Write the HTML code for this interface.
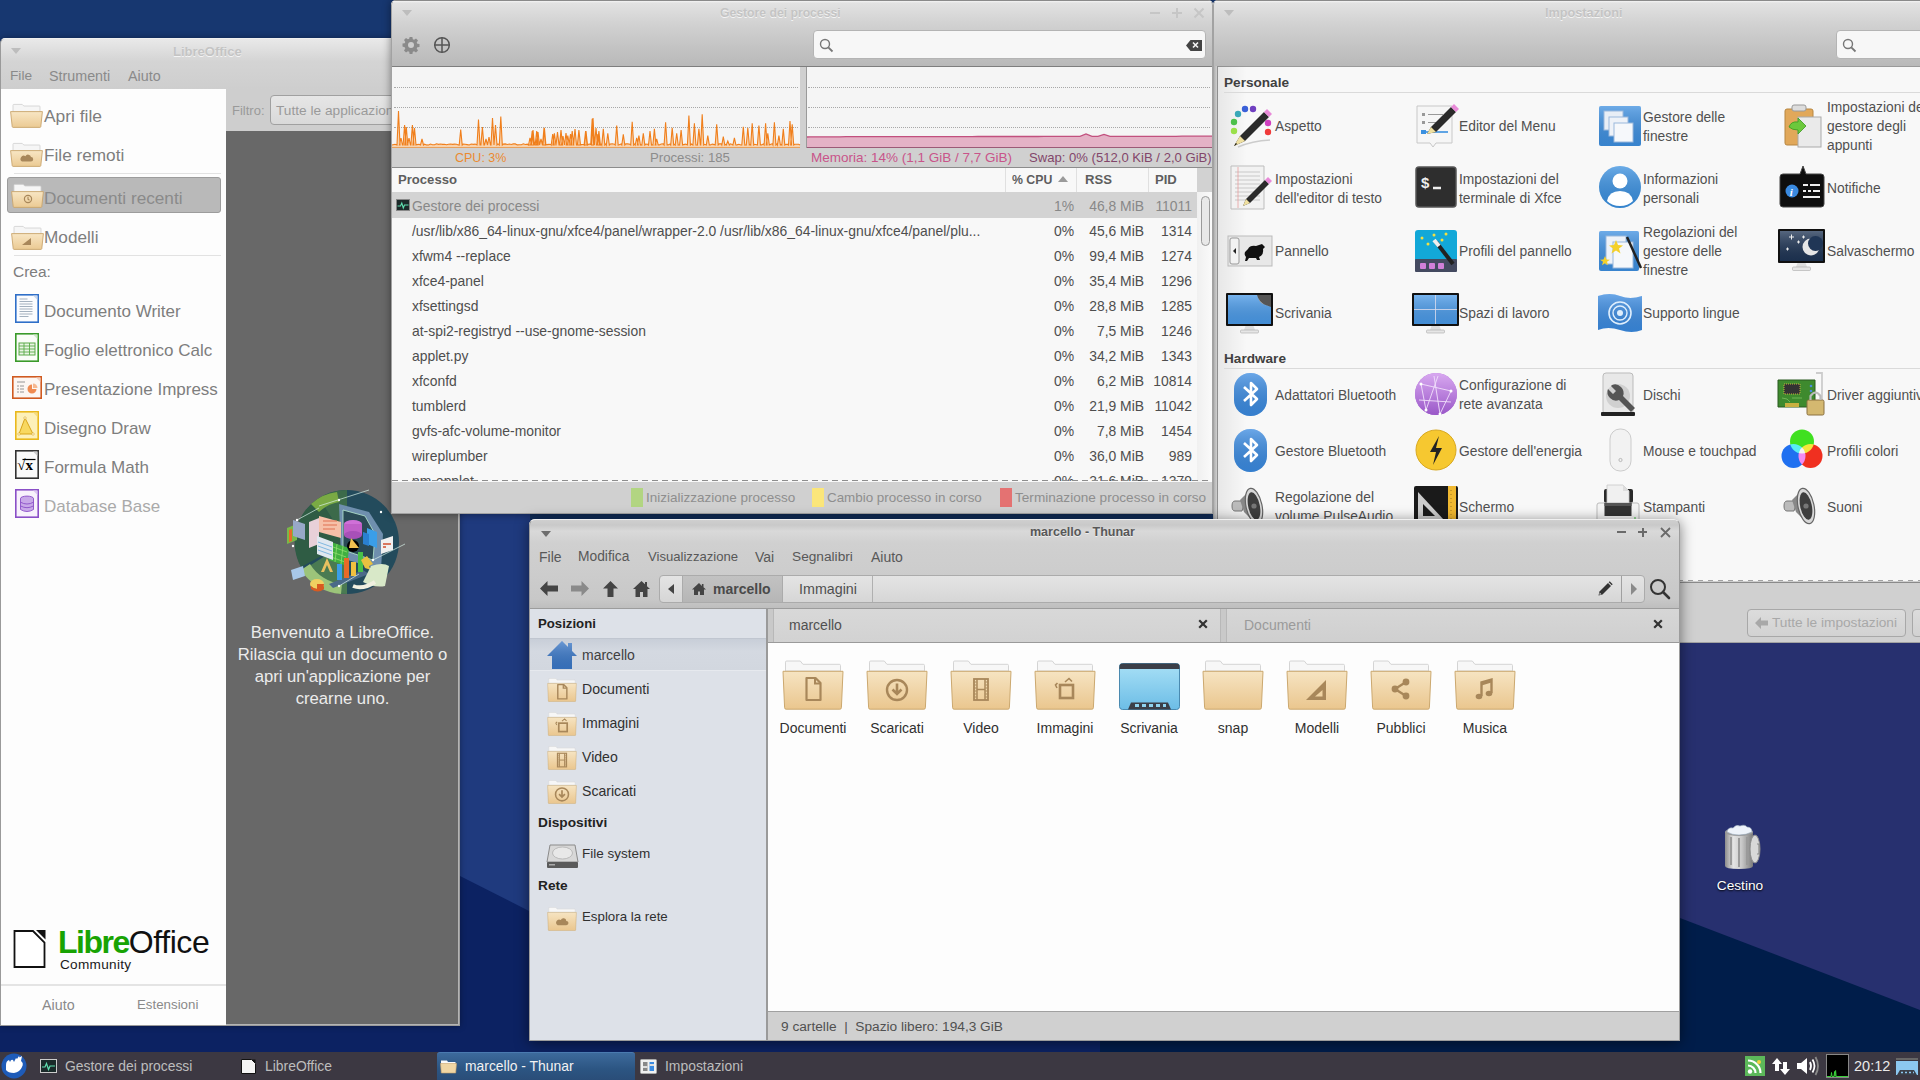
<!DOCTYPE html>
<html><head><meta charset="utf-8">
<style>
*{box-sizing:border-box}
html,body{margin:0;padding:0}
body{width:1920px;height:1080px;position:relative;overflow:hidden;background:#173770;font-family:"Liberation Sans",sans-serif;font-size:13.7px;line-height:16px;color:#505050}
.a{position:absolute}
.nw{white-space:nowrap}
.tbar{background:linear-gradient(#e8e8e8,#d2d2d2 70%,#cecece)}
.itl{color:#c4c4c4;font-weight:700;font-size:13px;text-shadow:0 1px 0 #f4f4f4}
.mbtn{color:#c8c8c8;font-size:16px}
svg{display:block}
</style></head><body>
<svg width="0" height="0" style="position:absolute">
<defs>
<linearGradient id="gtrash" x1="0" y1="0" x2="1" y2="0"><stop offset="0" stop-color="#888" stop-opacity=".5"/><stop offset=".4" stop-color="#fff" stop-opacity=".5"/><stop offset="1" stop-color="#555" stop-opacity=".5"/></linearGradient>
<linearGradient id="gbig" x1="0" y1="0" x2="0" y2="1"><stop offset="0" stop-color="#f6e4c2"/><stop offset="1" stop-color="#eac68e"/></linearGradient>
<linearGradient id="gdesk" x1="0" y1="0" x2="0" y2="1"><stop offset="0" stop-color="#a8e0f6"/><stop offset="1" stop-color="#6cbde6"/></linearGradient>
<symbol id="bigfold" viewBox="0 0 62 50"><path d="M3.5 11V2.2q0-1.2 1.2-1.2h13.6l2.6 3.3h36.4q1.2 0 1.2 1.2V11z" fill="#f7f7f7" stroke="#d4d4d4"/><path d="M1 11.3h60l-1.6 36.4q-.1 1.5-1.5 1.5H4.1q-1.4 0-1.5-1.5z" fill="url(#gbig)" stroke="#cba86f"/></symbol>
<symbol id="s_doc" viewBox="0 0 62 50"><path d="M24.5 18h9l5 5v17h-14z" fill="none" stroke="#a8875a" stroke-width="2.2" stroke-linejoin="round"/><path d="M33 18v5.5h5.5" fill="none" stroke="#a8875a" stroke-width="2"/></symbol>
<symbol id="s_dl" viewBox="0 0 62 50"><circle cx="31" cy="30" r="10" fill="none" stroke="#a8875a" stroke-width="2.4"/><path d="M31 23.5v10M26.5 29.5l4.5 4.5 4.5-4.5" fill="none" stroke="#a8875a" stroke-width="2.6"/></symbol>
<symbol id="s_vid" viewBox="0 0 62 50"><rect x="24" y="19" width="14" height="21" fill="none" stroke="#a8875a" stroke-width="1.8"/><path d="M27 19v21M35 19v21M27 29.5h8" stroke="#a8875a" stroke-width="1.5"/><path d="M24.5 22h2M24.5 25h2M24.5 28h2M24.5 31h2M24.5 34h2M24.5 37h2M35.5 22h2M35.5 25h2M35.5 28h2M35.5 31h2M35.5 34h2M35.5 37h2" stroke="#a8875a" stroke-width="1.2"/></symbol>
<symbol id="s_img" viewBox="0 0 62 50"><rect x="26" y="25" width="13" height="13" fill="none" stroke="#a8875a" stroke-width="2.6"/><path d="M31 22l4-3.5 3 3M23 28l-1.5-3 2-2" fill="none" stroke="#a8875a" stroke-width="1.6"/></symbol>
<symbol id="s_tpl" viewBox="0 0 62 50"><path d="M40 20v20H20z" fill="#a8875a"/><path d="M36.5 30v6.5H29z" fill="#efd3a3"/></symbol>
<symbol id="s_pub" viewBox="0 0 62 50"><path d="M36 22L25 29l11 7" fill="none" stroke="#a8875a" stroke-width="2.4"/><circle cx="36" cy="22" r="3.4" fill="#a8875a"/><circle cx="25" cy="29" r="3.4" fill="#a8875a"/><circle cx="36" cy="36" r="3.4" fill="#a8875a"/></symbol>
<symbol id="s_mus" viewBox="0 0 62 50"><path d="M27.5 36V22.5l10-3V33" fill="none" stroke="#a8875a" stroke-width="2.4"/><ellipse cx="25" cy="36.5" rx="3.3" ry="2.7" fill="#a8875a"/><ellipse cx="35" cy="33.5" rx="3.3" ry="2.7" fill="#a8875a"/><path d="M27.5 22.5l10-3v3l-10 3z" fill="#a8875a"/></symbol>
<linearGradient id="gblue" x1="0" y1="0" x2="0" y2="1"><stop offset="0" stop-color="#fff" stop-opacity=".25"/><stop offset="1" stop-color="#000" stop-opacity=".08"/></linearGradient>
<linearGradient id="gpurple" x1="0" y1="0" x2="0" y2="1"><stop offset="0" stop-color="#d8a8f0"/><stop offset="1" stop-color="#9a58c8"/></linearGradient>
<linearGradient id="gfold" x1="0" y1="0" x2="0" y2="1"><stop offset="0" stop-color="#f8e6c4"/><stop offset="1" stop-color="#ebca93"/></linearGradient>
<symbol id="fold" viewBox="0 0 33 25">
<path d="M3 9V2.2q0-.8.8-.8h8.4l1.6 1.6h15.4q.8 0 .8.8V9z" fill="#f6f6f6" stroke="#cfcfcf" stroke-width=".8"/>
<path d="M.6 8.6h31.8l-1.6 15q-.1.8-.9.8H3.1q-.8 0-.9-.8z" fill="url(#gfold)" stroke="#c9a56d" stroke-width=".9"/>
</symbol>
<symbol id="lowriter" viewBox="0 0 26 31"><rect x="1" y="1" width="24" height="29" fill="#2f6fc8"/><rect x="2.6" y="2.6" width="20.8" height="25.8" fill="#fbfcfe"/><path d="M19 2.6h4.4V7z" fill="#c8d8ee"/><path d="M5.5 6h8M5.5 8.5h13M5.5 11h13M5.5 13.5h13M5.5 16h13M5.5 18.5h13M5.5 21h13M5.5 23.5h9" stroke="#9aa8b8" stroke-width=".9"/></symbol>
<symbol id="localc" viewBox="0 0 26 31"><rect x="1" y="1" width="24" height="29" fill="#3a9a2a"/><rect x="2.6" y="2.6" width="20.8" height="25.8" fill="#fafdf8"/><path d="M19 2.6h4.4V7z" fill="#cfe6c8"/><rect x="5" y="11" width="16" height="12" fill="#eaf5e4" stroke="#5aaa48" stroke-width="1"/><path d="M5 14h16M5 17h16M5 20h16M10 11v12M15.5 11v12" stroke="#5aaa48" stroke-width=".9"/></symbol>
<symbol id="loimpress" viewBox="0 0 32 25"><rect x="1" y="1" width="30" height="23" fill="#d05a20"/><rect x="2.6" y="2.6" width="26.8" height="19.8" fill="#fcf6f2"/><path d="M25 2.6h4.4V7z" fill="#f0d0c0"/><path d="M21 9.5a4.5 4.5 0 1 0 4.5 4.5H21z" fill="#f08a50"/><path d="M22 8.5v4.5h4.5a4.5 4.5 0 0 0-4.5-4.5z" fill="#f6b890"/><path d="M6 7h8M6 11h2M9 11h4M6 14h2M9 14h4M6 17h2M9 17h4" stroke="#8a8a8a" stroke-width=".9"/></symbol>
<symbol id="lodraw" viewBox="0 0 26 31"><rect x="1" y="1" width="24" height="29" fill="#e9b81c"/><rect x="2.6" y="2.6" width="20.8" height="25.8" fill="#fdf0b8"/><path d="M19 2.6h4.4V7z" fill="#f6dc80"/><path d="M11 8l-6 16h14z" fill="#f8d860" stroke="#d8a418" stroke-width="1"/><circle cx="11" cy="8" r="1.2" fill="#fff" stroke="#d8a418" stroke-width=".6"/><circle cx="5" cy="24" r="1.2" fill="#fff" stroke="#d8a418" stroke-width=".6"/><circle cx="19" cy="24" r="1.2" fill="#fff" stroke="#d8a418" stroke-width=".6"/></symbol>
<symbol id="lomath" viewBox="0 0 26 31"><rect x="1" y="1" width="24" height="29" fill="#333"/><rect x="2.6" y="2.6" width="20.8" height="25.8" fill="#fafafa"/><path d="M19 2.6h4.4V7z" fill="#ccc"/><text x="3.2" y="21" font-family="Liberation Serif" font-size="15" font-weight="700" fill="#000">&#8730;x</text><path d="M8.5 10.5h13" stroke="#000" stroke-width="1.2"/></symbol>
<symbol id="lobase" viewBox="0 0 26 31"><rect x="1" y="1" width="24" height="29" fill="#8a4fc7"/><rect x="2.6" y="2.6" width="20.8" height="25.8" fill="#f8f2fc"/><path d="M19 2.6h4.4V7z" fill="#dcc8f0"/><ellipse cx="13" cy="10.5" rx="6.5" ry="2.4" fill="#c8a8e8" stroke="#8a4fc7" stroke-width=".9"/><path d="M6.5 10.5v11q6.5 4 13 0v-11" fill="#c8a8e8" stroke="#8a4fc7" stroke-width=".9"/><path d="M6.5 14.2q6.5 3.6 13 0M6.5 17.9q6.5 3.6 13 0" fill="none" stroke="#8a4fc7" stroke-width=".9"/></symbol>
<symbol id="lowelcome" viewBox="0 0 125 118">
<circle cx="66" cy="60" r="52" fill="#234b5c"/>
<path d="M66 60L20 85A52 52 0 0 1 38 16z" fill="#2f5c44"/>
<path d="M66 60L38 16A52 52 0 0 1 66 8z" fill="#3c6a4a"/>
<path d="M66 60L22 88A52 52 0 0 0 66 112z" fill="#4a7a52"/>
<path d="M30 22A46 46 0 0 1 56 10l2 10a38 38 0 0 0-20 10z" fill="#7aaa44"/>
<path d="M20 88A52 52 0 0 0 60 112l1-10a42 42 0 0 1-32-20z" fill="#9cc47a"/>
<path d="M58 22l30 8 14 22-2 36-40-12z" fill="#6f8fae"/>
<path d="M62 28l22 6 10 18-2 26-30-10z" fill="#2a4a56" stroke="#b8e8d0" stroke-width=".8"/>
<ellipse cx="72" cy="42" rx="9" ry="4" fill="#d070d8"/><rect x="63" y="42" width="18" height="11" fill="#c060c8"/><ellipse cx="72" cy="53" rx="9" ry="4" fill="#a850b8"/>
<path d="M86 46l10 4v16l-10-4z" fill="#3a9ee8"/><path d="M82 50l6 2v12l-6-2z" fill="#2a80d0"/>
<path d="M38 34l22 6v16l-22-6z" fill="#f6c0a8"/><path d="M42 39h14M42 43h14M42 47h12" stroke="#e07050" stroke-width="1"/>
<path d="M28 40l10-4v26l-10 4z" fill="#e8d0d8"/>
<path d="M50 60l18 6-2 18-18-6z" fill="#40b040"/><path d="M52 65l14 5M51 70l14 5M50 75l14 5M56 62l-2 18M62 64l-2 18" stroke="#90e070" stroke-width=".8"/>
<path d="M36 54l16 6v18l-16-6z" fill="#e0e8f0"/><path d="M37 60l14 5M37 64l14 5M37 68l14 5" stroke="#80b8e0" stroke-width="1"/>
<circle cx="72" cy="64" r="6" fill="#000"/><path d="M70 56l8 10h-10z" fill="#f0c050"/>
<path d="M48 102l34-14 6 4-36 14z" fill="#4a6a88"/>
<rect x="56" y="82" width="5" height="16" fill="#3a9ee8"/><rect x="63" y="76" width="5" height="20" fill="#e86a28"/><rect x="70" y="80" width="5" height="14" fill="#f0c040"/><rect x="77" y="70" width="5" height="20" fill="#48c048"/>
<path d="M40 90l6-14 6 14h-3l-3-7-3 7z" fill="#e8c060"/>
<path d="M80 78l6-4 6 8-4 2 2 4-6-2z" fill="#e8c040"/>
<ellipse cx="36" cy="102" rx="7" ry="5" fill="#f0d060"/><path d="M36 102l7 0q0 5-7 6z" fill="#d85a20"/><path d="M30 104q6 6 13 0v3q-6 5-13 0z" fill="#d85a20"/>
<path d="M6 46l10-4v16l-10 4z" fill="#7ab848"/><path d="M8 48l3-1v12l-3 1z" fill="#e86a28"/><path d="M12 38l12 4v16l-12-4z" fill="#98a8c8"/>
<path d="M100 58l12-4v14l-12 4z" fill="#f0f0f0"/><path d="M102 62h8M102 65h3" stroke="#d05030" stroke-width="1.5"/>
<path d="M10 88l12-4 2 10-12 4z" fill="#a8c8e8"/>
<path d="M90 84q12-4 18 0l-4 20q-10 2-22-4z" fill="#d8e8c8"/><path d="M72 104q10 4 22-4" stroke="#f0f0e0" stroke-width="4" fill="none"/>
<path d="M38 24l50-16M16 38l22-12M92 78l32-16M58 104l20-12" stroke="#d8f0e8" stroke-width=".7"/>
<circle cx="58" cy="18" r="1.2" fill="#fff"/><circle cx="16" cy="38" r="1.2" fill="#fff"/><circle cx="100" cy="30" r="1.2" fill="#fff"/><circle cx="92" cy="78" r="1.2" fill="#fff"/><circle cx="58" cy="104" r="1.2" fill="#fff"/><circle cx="12" cy="64" r="1.2" fill="#fff"/>
</symbol>
</defs></svg>

<!-- desktop wallpaper -->
<svg class="a" style="left:0;top:0" width="1920" height="1080">
<rect width="1920" height="1080" fill="#173770"/>
<polygon points="430,380 1920,380 1920,1080 430,1080" fill="#1f3a7e"/>
<polygon points="1200,560 1920,560 1920,1080 1200,1080" fill="#27306f"/>
<polygon points="0,650 460,876 529,911 1100,960 1100,1080 0,1080" fill="#0c2262"/>
<polygon points="1100,700 1680,918 1920,1010 1920,1080 1100,1080" fill="#001d4a"/>
<rect x="530" y="513" width="690" height="7" fill="#12305f"/>
</svg>

<!-- ============ LibreOffice ============ -->
<div id="lo" class="a" style="left:0;top:38px;width:460px;height:988px;background:#cecece;border:1px solid #9a9a9a;border-top-color:#f0f0f0;border-radius:5px 5px 0 0;box-shadow:0 0 6px rgba(0,0,0,.35)">
  <div class="a" style="left:0;top:0;width:458px;height:50px;border-radius:5px 5px 0 0;background:linear-gradient(#e9e9e9,#d4d4d4 45%,#cecece)"></div>
  <div class="a" style="left:10px;top:9px;width:0;height:0;border-left:5px solid transparent;border-right:5px solid transparent;border-top:6px solid #bdbdbd"></div>
  <div class="a itl nw" style="left:172px;top:5px">LibreOffice</div>
  <div class="a nw" style="left:9px;top:29px;color:#8a8a8a">File</div>
  <div class="a nw" style="left:48px;top:29px;color:#8a8a8a;font-size:14.3px">Strumenti</div>
  <div class="a nw" style="left:127px;top:29px;color:#8a8a8a;font-size:14.3px">Aiuto</div>
  <!-- left white panel -->
  <div class="a" style="left:0;top:50px;width:225px;height:936px;background:#fdfdfd"></div>
  <div class="a" style="left:6px;top:138px;width:214px;height:36px;background:#b9b9b9;border:1px solid #9c9c9c;border-radius:3px"></div>
  <div class="a" style="left:13px;top:134px;width:207px;height:1px;background:#e2e2e2"></div>
  <div class="a" style="left:13px;top:216px;width:207px;height:1px;background:#e2e2e2"></div>
  <svg class="a" style="left:9px;top:64px" width="33" height="25"><use href="#fold"/></svg>
  <svg class="a" style="left:9px;top:103px" width="33" height="25"><use href="#fold"/><path d="M12 19.5h9a2.2 2.2 0 0 0 0-4.4 3 3 0 0 0-5.6-.9A2.6 2.6 0 0 0 12 19.5z" fill="#a8875a"/></svg>
  <svg class="a" style="left:10px;top:144px" width="33" height="25"><use href="#fold"/><circle cx="17" cy="16" r="3.6" fill="none" stroke="#a8875a" stroke-width="1.2"/><path d="M17 13.8v2.4l1.5 1" fill="none" stroke="#a8875a" stroke-width="1.1"/></svg>
  <svg class="a" style="left:10px;top:186px" width="33" height="25"><use href="#fold"/><path d="M11 20h9v-7z" fill="#a8875a"/></svg>
  <div class="a nw" style="left:43px;top:67px;font-size:17.4px;line-height:20px;color:#7e7e7e">Apri file</div>
  <div class="a nw" style="left:43px;top:106px;font-size:17.2px;line-height:20px;color:#7e7e7e">File remoti</div>
  <div class="a nw" style="left:43px;top:149px;font-size:17.2px;line-height:20px;color:#8a8a8a">Documenti recenti</div>
  <div class="a nw" style="left:43px;top:188px;font-size:17.2px;line-height:20px;color:#7e7e7e">Modelli</div>
  <div class="a nw" style="left:12px;top:224px;font-size:15.5px;line-height:18px;color:#7e7e7e">Crea:</div>
  <svg class="a" style="left:13px;top:254px" width="26" height="31"><use href="#lowriter"/></svg>
  <svg class="a" style="left:13px;top:293px" width="26" height="31"><use href="#localc"/></svg>
  <svg class="a" style="left:10px;top:336px" width="32" height="25"><use href="#loimpress"/></svg>
  <svg class="a" style="left:13px;top:371px" width="26" height="31"><use href="#lodraw"/></svg>
  <svg class="a" style="left:13px;top:410px" width="26" height="31"><use href="#lomath"/></svg>
  <svg class="a" style="left:13px;top:449px" width="26" height="31"><use href="#lobase"/></svg>
  <div class="a nw" style="left:43px;top:263px;font-size:17px;line-height:20px;color:#7e7e7e">Documento Writer</div>
  <div class="a nw" style="left:43px;top:302px;font-size:17px;line-height:20px;color:#7e7e7e">Foglio elettronico Calc</div>
  <div class="a nw" style="left:43px;top:341px;font-size:17px;line-height:20px;color:#7e7e7e">Presentazione Impress</div>
  <div class="a nw" style="left:43px;top:380px;font-size:17px;line-height:20px;color:#7e7e7e">Disegno Draw</div>
  <div class="a nw" style="left:43px;top:419px;font-size:17px;line-height:20px;color:#7e7e7e">Formula Math</div>
  <div class="a nw" style="left:43px;top:458px;font-size:17px;line-height:20px;color:#aaaaaa">Database Base</div>
  <!-- logo -->
  <svg class="a" style="left:12px;top:890px" width="34" height="41"><path d="M1.5 2h18.5l11.5 11.5v24.5h-30z" fill="#fff" stroke="#111" stroke-width="1.8"/><path d="M23 1h9.5v9.5z" fill="#111"/></svg>
  <div class="a nw" style="left:57px;top:885px;font-size:32px;line-height:36px;color:#18a303;font-weight:700;letter-spacing:-1.5px">Libre<span style="color:#111;font-weight:400;letter-spacing:-.4px">Office</span></div>
  <div class="a nw" style="left:59px;top:918px;font-size:13.6px;line-height:16px;color:#1a1a1a;font-weight:400;letter-spacing:.3px">Community</div>
  <div class="a" style="left:0;top:945px;width:225px;height:2px;background:#e4e4e4"></div>
  <div class="a nw" style="left:41px;top:958px;font-size:14.3px;color:#8a8a8a">Aiuto</div>
  <div class="a nw" style="left:136px;top:958px;font-size:13.3px;color:#8a8a8a">Estensioni</div>
  <!-- right area -->
  <div class="a" style="left:225px;top:92px;width:233px;height:894px;background:#686868;border-right:1px solid #b4b4b4;border-bottom:1px solid #b4b4b4"></div>
  <div class="a nw" style="left:231px;top:64px;color:#9a9a9a;font-size:13px">Filtro:</div>
  <div class="a" style="left:269px;top:56px;width:200px;height:30px;border:1px solid #a0a0a0;border-radius:4px;background:linear-gradient(#e6e6e6,#d9d9d9)"></div>
  <div class="a nw" style="left:275px;top:64px;color:#9a9a9a">Tutte le applicazioni</div>
  <svg class="a" style="left:280px;top:443px" width="125" height="118"><use href="#lowelcome"/></svg>
  <div class="a" style="left:225px;top:583px;width:233px;text-align:center;font-size:16.7px;line-height:22px;color:#ececec">Benvenuto a LibreOffice.<br>Rilascia qui un documento o<br>apri un'applicazione per<br>crearne uno.</div>
</div>

<!-- ============ Task manager ============ -->
<div id="tm" class="a" style="left:391px;top:0;width:822px;height:514px;background:#d0d0d0;border-radius:5px 5px 0 0;box-shadow:0 0 8px rgba(0,0,0,.45);overflow:hidden">
<div class="a" style="left:0;top:0;width:822px;height:66px;background:linear-gradient(#8a8a8a 0,#8a8a8a 1px,#f4f4f4 1px,#e2e2e2 3px,#d2d2d2 35%,#c4c4c4 70%,#b9b9b9)"></div>
<div class="a" style="left:0;top:66px;width:822px;height:1px;background:#7e7e7e"></div>
<div class="a" style="left:11px;top:10px;width:0;height:0;border-left:5px solid transparent;border-right:5px solid transparent;border-top:6px solid #bdbdbd"></div>
<div class="a itl nw" style="left:329px;top:5px;font-size:12.2px">Gestore dei processi</div>
<div class="a" style="left:759px;top:12px;width:10px;height:2px;background:#c6c6c6"></div>
<div class="a" style="left:781px;top:12px;width:10px;height:2px;background:#c6c6c6"></div><div class="a" style="left:785px;top:8px;width:2px;height:10px;background:#c6c6c6"></div>
<svg class="a" style="left:802px;top:7px" width="12" height="12"><path d="M1.5 1.5l9 9M10.5 1.5l-9 9" stroke="#c6c6c6" stroke-width="2"/></svg>
<svg class="a" style="left:11px;top:36px" width="18" height="18" viewBox="0 0 18 18"><path d="M7.6 1h2.8l.4 2.2 1.3.6 1.9-1.3 2 2-1.3 1.9.6 1.3 2.2.4v2.8l-2.2.4-.6 1.3 1.3 1.9-2 2-1.9-1.3-1.3.6-.4 2.2H7.6l-.4-2.2-1.3-.6-1.9 1.3-2-2 1.3-1.9-.6-1.3L.5 10.4V7.6l2.2-.4.6-1.3L2 4l2-2 1.9 1.3 1.3-.6z" fill="#8a8a8a"/><circle cx="9" cy="9" r="3" fill="#cdcdcd"/></svg>
<svg class="a" style="left:42px;top:36px" width="18" height="18" viewBox="0 0 18 18"><circle cx="9" cy="9" r="7.3" fill="none" stroke="#555" stroke-width="1.5"/><path d="M1.5 9h15M9 1.5v15" stroke="#555" stroke-width="1.5"/></svg>
<div class="a" style="left:422px;top:30px;width:393px;height:29px;background:#f7f7f7;border:1px solid #b4b4b4;border-radius:4px"></div>
<svg class="a" style="left:428px;top:38px" width="15" height="15"><circle cx="6" cy="6" r="4.5" fill="none" stroke="#777" stroke-width="1.4"/><path d="M9.3 9.3l4.2 4.2" stroke="#777" stroke-width="1.8"/></svg>
<svg class="a" style="left:795px;top:40px" width="16" height="11"><path d="M0 5.5L4.5 0H16v11H4.5z" fill="#444"/><path d="M7 2.5l5 5M12 2.5l-5 5" stroke="#f4f4f4" stroke-width="1.6"/></svg>
<div class="a" style="left:1px;top:67px;width:820px;height:100px;background:#d0d0d0"></div>
<div class="a" style="left:1px;top:67px;width:408px;height:81px;background:#f5f5f5"></div>
<div class="a" style="left:415px;top:67px;width:406px;height:81px;background:#f5f5f5;border-left:1px solid #9a9a9a"></div>
<div class="a" style="left:3px;top:87px;width:404px;height:0;border-top:1px dotted #a8a8a8"></div>
<div class="a" style="left:417px;top:87px;width:402px;height:0;border-top:1px dotted #a8a8a8"></div>
<div class="a" style="left:3px;top:107px;width:404px;height:0;border-top:1px dotted #a8a8a8"></div>
<div class="a" style="left:417px;top:107px;width:402px;height:0;border-top:1px dotted #a8a8a8"></div>
<div class="a" style="left:3px;top:127px;width:404px;height:0;border-top:1px dotted #a8a8a8"></div>
<div class="a" style="left:417px;top:127px;width:402px;height:0;border-top:1px dotted #a8a8a8"></div>
<svg class="a" style="left:0;top:0" width="822" height="150"><polygon points="1,147 1.0,145.0 2.0,144.7 4.0,144.3 6.0,145.0 7.5,111.0 9.0,145.0 8.5,145.0 10.0,138.0 11.5,145.0 12.1,145.0 13.6,125.0 15.1,145.0 13.8,145.0 15.3,127.0 16.8,145.0 16.5,145.0 18.0,138.0 19.5,145.0 19.9,145.0 21.4,125.0 22.9,145.0 22.0,145.0 23.5,128.0 25.0,145.0 26.0,144.6 28.0,144.3 29.5,145.0 31.0,139.0 32.5,145.0 33.5,144.2 35.5,144.9 37.5,145.0 39.5,144.0 41.5,144.7 43.5,144.7 45.5,143.8 47.5,144.4 49.5,144.0 51.5,144.4 53.5,144.2 55.5,144.8 57.5,144.2 59.5,144.0 61.5,144.4 63.5,144.1 65.5,144.2 67.5,144.9 68.2,145.0 69.7,129.6 71.2,145.0 72.2,144.1 74.2,144.3 76.2,144.6 78.2,145.0 80.2,144.0 82.2,144.4 84.2,144.1 86.0,145.0 87.5,119.5 89.0,145.0 89.9,145.0 91.4,127.0 92.9,145.0 93.5,145.0 95.0,139.0 96.5,145.0 96.5,145.0 98.0,137.0 99.5,145.0 100.0,145.0 101.5,118.0 103.0,145.0 103.0,145.0 104.5,125.0 106.0,145.0 107.0,143.9 108.3,145.0 109.8,116.5 111.3,145.0 112.3,144.1 114.3,143.9 116.3,144.5 118.3,144.0 120.3,144.5 122.3,143.9 124.3,143.9 126.3,144.9 128.3,144.8 130.3,144.7 132.3,143.8 134.3,144.5 136.3,144.2 137.5,145.0 139.0,137.8 140.5,145.0 137.5,145.0 139.0,138.0 140.5,145.0 139.7,145.0 141.2,131.1 142.7,145.0 140.5,145.0 142.0,130.0 143.5,145.0 143.5,145.0 145.0,140.0 146.5,145.0 144.2,145.0 145.7,131.1 147.2,145.0 145.5,145.0 147.0,132.0 148.5,145.0 148.5,145.0 150.0,139.0 151.5,145.0 151.5,145.0 153.0,128.0 154.5,145.0 151.9,145.0 153.4,127.8 154.9,145.0 155.9,144.6 157.9,144.4 159.9,144.5 160.2,145.0 161.7,134.0 163.2,145.0 161.9,145.0 163.4,133.3 164.9,145.0 165.0,145.0 166.5,132.0 168.0,145.0 168.5,145.0 170.0,130.0 171.5,145.0 168.6,145.0 170.1,131.1 171.6,145.0 170.5,145.0 172.0,136.0 173.5,145.0 173.5,145.0 175.0,133.0 176.5,145.0 175.3,145.0 176.8,135.6 178.3,145.0 178.0,145.0 179.5,134.0 181.0,145.0 179.7,145.0 181.2,131.1 182.7,145.0 182.5,145.0 184.0,129.0 185.5,145.0 186.4,145.0 187.9,130.0 189.4,145.0 186.5,145.0 188.0,131.0 189.5,145.0 190.5,144.6 192.5,144.3 193.1,145.0 194.6,131.1 196.1,145.0 193.5,145.0 195.0,131.0 196.5,145.0 197.5,144.3 199.5,143.9 199.7,145.0 201.2,118.9 202.7,145.0 200.5,145.0 202.0,118.0 203.5,145.0 203.5,145.0 205.0,128.0 206.5,145.0 205.5,145.0 207.0,134.0 208.5,145.0 206.4,145.0 207.9,131.1 209.4,145.0 210.4,144.2 210.8,145.0 212.3,128.9 213.8,145.0 214.8,143.9 215.3,145.0 216.8,133.3 218.3,145.0 219.3,144.0 221.3,143.8 223.3,144.2 224.2,145.0 225.7,125.6 227.2,145.0 228.2,144.8 230.2,144.0 230.8,145.0 232.3,134.4 233.8,145.0 234.8,143.8 236.8,143.9 238.8,144.3 239.7,145.0 241.2,121.8 242.7,145.0 243.7,144.1 244.2,145.0 245.7,137.8 247.2,145.0 246.4,145.0 247.9,135.6 249.4,145.0 250.4,144.7 250.8,145.0 252.3,133.3 253.8,145.0 254.8,144.0 256.8,144.3 257.5,145.0 259.0,131.1 260.5,145.0 261.5,144.7 261.9,145.0 263.4,128.9 264.9,145.0 264.2,145.0 265.7,138.9 267.2,145.0 268.2,144.9 270.2,144.0 272.2,143.8 273.1,145.0 274.6,122.2 276.1,145.0 277.1,144.9 279.1,144.0 279.7,145.0 281.2,127.8 282.7,145.0 283.7,144.5 284.2,145.0 285.7,133.3 287.2,145.0 288.2,144.8 288.6,145.0 290.1,130.0 291.6,145.0 292.6,144.6 294.6,144.1 296.4,145.0 297.9,115.6 299.4,145.0 300.4,144.0 301.9,145.0 303.4,123.3 304.9,145.0 305.9,144.9 306.4,145.0 307.9,128.9 309.4,145.0 309.7,145.0 311.2,114.4 312.7,145.0 313.7,144.3 315.3,145.0 316.8,135.6 318.3,145.0 319.3,144.9 321.3,144.1 323.3,144.6 324.2,145.0 325.7,124.4 327.2,145.0 328.2,143.9 330.2,143.8 330.8,145.0 332.3,136.7 333.8,145.0 334.8,144.4 335.3,145.0 336.8,141.1 338.3,145.0 339.3,143.8 341.3,144.6 341.9,145.0 343.4,137.8 344.9,145.0 345.9,144.9 347.9,144.3 349.9,145.0 350.8,145.0 352.3,126.7 353.8,145.0 354.8,144.8 355.3,145.0 356.8,127.8 358.3,145.0 359.3,144.5 359.7,145.0 361.2,123.3 362.7,145.0 363.7,144.3 365.7,144.8 366.4,145.0 367.9,125.6 369.4,145.0 370.4,144.9 372.4,144.0 373.1,145.0 374.6,123.3 376.1,145.0 375.3,145.0 376.8,133.3 378.3,145.0 379.3,144.6 381.3,143.8 381.9,145.0 383.4,122.2 384.9,145.0 385.9,143.9 386.4,145.0 387.9,135.6 389.4,145.0 390.4,144.5 390.8,145.0 392.3,128.9 393.8,145.0 394.8,144.4 396.8,144.4 397.5,145.0 399.0,121.1 400.5,145.0 399.7,145.0 401.2,124.4 402.7,145.0 403.7,144.2 405.7,144.3 407.7,144.3 409.0,145.0 409,147" fill="#f8d3ae"/><polyline points="1.0,145.0 2.0,144.7 4.0,144.3 6.0,145.0 7.5,111.0 9.0,145.0 8.5,145.0 10.0,138.0 11.5,145.0 12.1,145.0 13.6,125.0 15.1,145.0 13.8,145.0 15.3,127.0 16.8,145.0 16.5,145.0 18.0,138.0 19.5,145.0 19.9,145.0 21.4,125.0 22.9,145.0 22.0,145.0 23.5,128.0 25.0,145.0 26.0,144.6 28.0,144.3 29.5,145.0 31.0,139.0 32.5,145.0 33.5,144.2 35.5,144.9 37.5,145.0 39.5,144.0 41.5,144.7 43.5,144.7 45.5,143.8 47.5,144.4 49.5,144.0 51.5,144.4 53.5,144.2 55.5,144.8 57.5,144.2 59.5,144.0 61.5,144.4 63.5,144.1 65.5,144.2 67.5,144.9 68.2,145.0 69.7,129.6 71.2,145.0 72.2,144.1 74.2,144.3 76.2,144.6 78.2,145.0 80.2,144.0 82.2,144.4 84.2,144.1 86.0,145.0 87.5,119.5 89.0,145.0 89.9,145.0 91.4,127.0 92.9,145.0 93.5,145.0 95.0,139.0 96.5,145.0 96.5,145.0 98.0,137.0 99.5,145.0 100.0,145.0 101.5,118.0 103.0,145.0 103.0,145.0 104.5,125.0 106.0,145.0 107.0,143.9 108.3,145.0 109.8,116.5 111.3,145.0 112.3,144.1 114.3,143.9 116.3,144.5 118.3,144.0 120.3,144.5 122.3,143.9 124.3,143.9 126.3,144.9 128.3,144.8 130.3,144.7 132.3,143.8 134.3,144.5 136.3,144.2 137.5,145.0 139.0,137.8 140.5,145.0 137.5,145.0 139.0,138.0 140.5,145.0 139.7,145.0 141.2,131.1 142.7,145.0 140.5,145.0 142.0,130.0 143.5,145.0 143.5,145.0 145.0,140.0 146.5,145.0 144.2,145.0 145.7,131.1 147.2,145.0 145.5,145.0 147.0,132.0 148.5,145.0 148.5,145.0 150.0,139.0 151.5,145.0 151.5,145.0 153.0,128.0 154.5,145.0 151.9,145.0 153.4,127.8 154.9,145.0 155.9,144.6 157.9,144.4 159.9,144.5 160.2,145.0 161.7,134.0 163.2,145.0 161.9,145.0 163.4,133.3 164.9,145.0 165.0,145.0 166.5,132.0 168.0,145.0 168.5,145.0 170.0,130.0 171.5,145.0 168.6,145.0 170.1,131.1 171.6,145.0 170.5,145.0 172.0,136.0 173.5,145.0 173.5,145.0 175.0,133.0 176.5,145.0 175.3,145.0 176.8,135.6 178.3,145.0 178.0,145.0 179.5,134.0 181.0,145.0 179.7,145.0 181.2,131.1 182.7,145.0 182.5,145.0 184.0,129.0 185.5,145.0 186.4,145.0 187.9,130.0 189.4,145.0 186.5,145.0 188.0,131.0 189.5,145.0 190.5,144.6 192.5,144.3 193.1,145.0 194.6,131.1 196.1,145.0 193.5,145.0 195.0,131.0 196.5,145.0 197.5,144.3 199.5,143.9 199.7,145.0 201.2,118.9 202.7,145.0 200.5,145.0 202.0,118.0 203.5,145.0 203.5,145.0 205.0,128.0 206.5,145.0 205.5,145.0 207.0,134.0 208.5,145.0 206.4,145.0 207.9,131.1 209.4,145.0 210.4,144.2 210.8,145.0 212.3,128.9 213.8,145.0 214.8,143.9 215.3,145.0 216.8,133.3 218.3,145.0 219.3,144.0 221.3,143.8 223.3,144.2 224.2,145.0 225.7,125.6 227.2,145.0 228.2,144.8 230.2,144.0 230.8,145.0 232.3,134.4 233.8,145.0 234.8,143.8 236.8,143.9 238.8,144.3 239.7,145.0 241.2,121.8 242.7,145.0 243.7,144.1 244.2,145.0 245.7,137.8 247.2,145.0 246.4,145.0 247.9,135.6 249.4,145.0 250.4,144.7 250.8,145.0 252.3,133.3 253.8,145.0 254.8,144.0 256.8,144.3 257.5,145.0 259.0,131.1 260.5,145.0 261.5,144.7 261.9,145.0 263.4,128.9 264.9,145.0 264.2,145.0 265.7,138.9 267.2,145.0 268.2,144.9 270.2,144.0 272.2,143.8 273.1,145.0 274.6,122.2 276.1,145.0 277.1,144.9 279.1,144.0 279.7,145.0 281.2,127.8 282.7,145.0 283.7,144.5 284.2,145.0 285.7,133.3 287.2,145.0 288.2,144.8 288.6,145.0 290.1,130.0 291.6,145.0 292.6,144.6 294.6,144.1 296.4,145.0 297.9,115.6 299.4,145.0 300.4,144.0 301.9,145.0 303.4,123.3 304.9,145.0 305.9,144.9 306.4,145.0 307.9,128.9 309.4,145.0 309.7,145.0 311.2,114.4 312.7,145.0 313.7,144.3 315.3,145.0 316.8,135.6 318.3,145.0 319.3,144.9 321.3,144.1 323.3,144.6 324.2,145.0 325.7,124.4 327.2,145.0 328.2,143.9 330.2,143.8 330.8,145.0 332.3,136.7 333.8,145.0 334.8,144.4 335.3,145.0 336.8,141.1 338.3,145.0 339.3,143.8 341.3,144.6 341.9,145.0 343.4,137.8 344.9,145.0 345.9,144.9 347.9,144.3 349.9,145.0 350.8,145.0 352.3,126.7 353.8,145.0 354.8,144.8 355.3,145.0 356.8,127.8 358.3,145.0 359.3,144.5 359.7,145.0 361.2,123.3 362.7,145.0 363.7,144.3 365.7,144.8 366.4,145.0 367.9,125.6 369.4,145.0 370.4,144.9 372.4,144.0 373.1,145.0 374.6,123.3 376.1,145.0 375.3,145.0 376.8,133.3 378.3,145.0 379.3,144.6 381.3,143.8 381.9,145.0 383.4,122.2 384.9,145.0 385.9,143.9 386.4,145.0 387.9,135.6 389.4,145.0 390.4,144.5 390.8,145.0 392.3,128.9 393.8,145.0 394.8,144.4 396.8,144.4 397.5,145.0 399.0,121.1 400.5,145.0 399.7,145.0 401.2,124.4 402.7,145.0 403.7,144.2 405.7,144.3 407.7,144.3 409.0,145.0" fill="none" stroke="#f07f1c" stroke-width="1.1"/><path d="M1 147.5H409" stroke="#e7a05c" stroke-width="1"/>
<polygon points="416,147.5 416.0,137.0 419.0,136.8 425.0,136.8 431.0,136.8 437.0,136.8 443.0,136.8 449.0,136.8 455.0,136.7 461.0,136.7 467.0,136.7 473.0,136.7 479.0,136.7 485.0,136.7 491.0,136.7 497.0,136.7 503.0,136.7 509.0,136.7 515.0,136.7 521.0,136.6 527.0,136.6 533.0,136.6 539.0,136.6 545.0,136.6 551.0,136.6 557.0,136.6 563.0,136.6 569.0,136.6 575.0,136.6 581.0,136.6 587.0,136.5 593.0,136.5 599.0,136.5 605.0,136.5 611.0,136.5 617.0,136.5 623.0,136.5 629.0,136.5 635.0,136.5 641.0,136.5 647.0,136.5 653.0,136.4 659.0,136.4 665.0,136.4 671.0,136.4 677.0,136.4 683.0,136.4 689.0,136.4 695.0,134.0 701.0,136.4 707.0,136.4 713.0,134.5 719.0,136.4 725.0,136.3 731.0,136.3 737.0,136.3 743.0,136.3 749.0,136.3 755.0,136.3 761.0,136.3 767.0,136.3 773.0,136.3 779.0,136.3 785.0,136.3 791.0,136.2 797.0,136.2 803.0,136.2 809.0,136.2 815.0,136.2 821.0,136.2 821,147.5" fill="#e4b2c6"/><polyline points="416.0,137.0 419.0,136.8 425.0,136.8 431.0,136.8 437.0,136.8 443.0,136.8 449.0,136.8 455.0,136.7 461.0,136.7 467.0,136.7 473.0,136.7 479.0,136.7 485.0,136.7 491.0,136.7 497.0,136.7 503.0,136.7 509.0,136.7 515.0,136.7 521.0,136.6 527.0,136.6 533.0,136.6 539.0,136.6 545.0,136.6 551.0,136.6 557.0,136.6 563.0,136.6 569.0,136.6 575.0,136.6 581.0,136.6 587.0,136.5 593.0,136.5 599.0,136.5 605.0,136.5 611.0,136.5 617.0,136.5 623.0,136.5 629.0,136.5 635.0,136.5 641.0,136.5 647.0,136.5 653.0,136.4 659.0,136.4 665.0,136.4 671.0,136.4 677.0,136.4 683.0,136.4 689.0,136.4 695.0,134.0 701.0,136.4 707.0,136.4 713.0,134.5 719.0,136.4 725.0,136.3 731.0,136.3 737.0,136.3 743.0,136.3 749.0,136.3 755.0,136.3 761.0,136.3 767.0,136.3 773.0,136.3 779.0,136.3 785.0,136.3 791.0,136.2 797.0,136.2 803.0,136.2 809.0,136.2 815.0,136.2 821.0,136.2" fill="none" stroke="#c2507e" stroke-width="1.3"/><path d="M416 147.5H821" stroke="#9b5a76" stroke-width="1.2"/></svg>
<div class="a nw" style="left:64px;top:150px;font-size:12.5px;color:#ea8a30">CPU: 3%</div>
<div class="a nw" style="left:259px;top:150px;font-size:13.2px;color:#8c8c8c">Processi: 185</div>
<div class="a nw" style="left:420px;top:150px;font-size:13.5px;color:#c9548a">Memoria: 14% (1,1 GiB / 7,7 GiB)</div>
<div class="a nw" style="left:638px;top:150px;font-size:13.1px;color:#83466a">Swap: 0% (512,0 KiB / 2,0 GiB)</div>
<div class="a" style="left:1px;top:167px;width:820px;height:1px;background:#8c8c8c"></div>
<div class="a" style="left:1px;top:168px;width:805px;height:24px;background:#f8f8f8"></div>
<div class="a" style="left:806px;top:168px;width:15px;height:24px;background:#d2d2d2"></div>
<div class="a" style="left:614px;top:168px;width:1px;height:24px;background:#e0e0e0"></div>
<div class="a" style="left:685px;top:168px;width:1px;height:24px;background:#e0e0e0"></div>
<div class="a" style="left:757px;top:168px;width:1px;height:24px;background:#e0e0e0"></div>
<div class="a nw" style="left:7px;top:172px;font-size:13.1px;font-weight:700;color:#5e5e5e">Processo</div>
<div class="a nw" style="left:621px;top:172px;font-size:12.3px;font-weight:700;color:#5e5e5e">% CPU</div>
<svg class="a" style="left:667px;top:175px" width="10" height="8"><path d="M0 7L5 1l5 6z" fill="#9a9a9a"/></svg>
<div class="a nw" style="left:694px;top:172px;font-size:13.1px;font-weight:700;color:#5e5e5e">RSS</div>
<div class="a nw" style="left:764px;top:172px;font-size:13.1px;font-weight:700;color:#5e5e5e">PID</div>
<div class="a" style="left:1px;top:192px;width:820px;height:290px;background:#f8f8f8"></div>
<div class="a" style="left:1px;top:192px;width:805px;height:26px;background:#d3d3d3"></div>
<div class="a" style="left:1px;top:192px;width:805px;height:289px;overflow:hidden">
<div class="a nw" style="left:20px;top:6px;font-size:13.9px;color:#888">Gestore dei processi</div>
<div class="a nw" style="right:123px;top:6px;font-size:13.9px;color:#888">1%</div>
<div class="a nw" style="right:53px;top:6px;font-size:13.9px;color:#888">46,8 MiB</div>
<div class="a nw" style="right:5px;top:6px;font-size:13.9px;color:#888">11011</div>
<div class="a nw" style="left:20px;top:31px;font-size:13.9px;color:#4e4e4e">/usr/lib/x86_64-linux-gnu/xfce4/panel/wrapper-2.0 /usr/lib/x86_64-linux-gnu/xfce4/panel/plu...</div>
<div class="a nw" style="right:123px;top:31px;font-size:13.9px;color:#4e4e4e">0%</div>
<div class="a nw" style="right:53px;top:31px;font-size:13.9px;color:#4e4e4e">45,6 MiB</div>
<div class="a nw" style="right:5px;top:31px;font-size:13.9px;color:#4e4e4e">1314</div>
<div class="a nw" style="left:20px;top:56px;font-size:13.9px;color:#4e4e4e">xfwm4 --replace</div>
<div class="a nw" style="right:123px;top:56px;font-size:13.9px;color:#4e4e4e">0%</div>
<div class="a nw" style="right:53px;top:56px;font-size:13.9px;color:#4e4e4e">99,4 MiB</div>
<div class="a nw" style="right:5px;top:56px;font-size:13.9px;color:#4e4e4e">1274</div>
<div class="a nw" style="left:20px;top:81px;font-size:13.9px;color:#4e4e4e">xfce4-panel</div>
<div class="a nw" style="right:123px;top:81px;font-size:13.9px;color:#4e4e4e">0%</div>
<div class="a nw" style="right:53px;top:81px;font-size:13.9px;color:#4e4e4e">35,4 MiB</div>
<div class="a nw" style="right:5px;top:81px;font-size:13.9px;color:#4e4e4e">1296</div>
<div class="a nw" style="left:20px;top:106px;font-size:13.9px;color:#4e4e4e">xfsettingsd</div>
<div class="a nw" style="right:123px;top:106px;font-size:13.9px;color:#4e4e4e">0%</div>
<div class="a nw" style="right:53px;top:106px;font-size:13.9px;color:#4e4e4e">28,8 MiB</div>
<div class="a nw" style="right:5px;top:106px;font-size:13.9px;color:#4e4e4e">1285</div>
<div class="a nw" style="left:20px;top:131px;font-size:13.9px;color:#4e4e4e">at-spi2-registryd --use-gnome-session</div>
<div class="a nw" style="right:123px;top:131px;font-size:13.9px;color:#4e4e4e">0%</div>
<div class="a nw" style="right:53px;top:131px;font-size:13.9px;color:#4e4e4e">7,5 MiB</div>
<div class="a nw" style="right:5px;top:131px;font-size:13.9px;color:#4e4e4e">1246</div>
<div class="a nw" style="left:20px;top:156px;font-size:13.9px;color:#4e4e4e">applet.py</div>
<div class="a nw" style="right:123px;top:156px;font-size:13.9px;color:#4e4e4e">0%</div>
<div class="a nw" style="right:53px;top:156px;font-size:13.9px;color:#4e4e4e">34,2 MiB</div>
<div class="a nw" style="right:5px;top:156px;font-size:13.9px;color:#4e4e4e">1343</div>
<div class="a nw" style="left:20px;top:181px;font-size:13.9px;color:#4e4e4e">xfconfd</div>
<div class="a nw" style="right:123px;top:181px;font-size:13.9px;color:#4e4e4e">0%</div>
<div class="a nw" style="right:53px;top:181px;font-size:13.9px;color:#4e4e4e">6,2 MiB</div>
<div class="a nw" style="right:5px;top:181px;font-size:13.9px;color:#4e4e4e">10814</div>
<div class="a nw" style="left:20px;top:206px;font-size:13.9px;color:#4e4e4e">tumblerd</div>
<div class="a nw" style="right:123px;top:206px;font-size:13.9px;color:#4e4e4e">0%</div>
<div class="a nw" style="right:53px;top:206px;font-size:13.9px;color:#4e4e4e">21,9 MiB</div>
<div class="a nw" style="right:5px;top:206px;font-size:13.9px;color:#4e4e4e">11042</div>
<div class="a nw" style="left:20px;top:231px;font-size:13.9px;color:#4e4e4e">gvfs-afc-volume-monitor</div>
<div class="a nw" style="right:123px;top:231px;font-size:13.9px;color:#4e4e4e">0%</div>
<div class="a nw" style="right:53px;top:231px;font-size:13.9px;color:#4e4e4e">7,8 MiB</div>
<div class="a nw" style="right:5px;top:231px;font-size:13.9px;color:#4e4e4e">1454</div>
<div class="a nw" style="left:20px;top:256px;font-size:13.9px;color:#4e4e4e">wireplumber</div>
<div class="a nw" style="right:123px;top:256px;font-size:13.9px;color:#4e4e4e">0%</div>
<div class="a nw" style="right:53px;top:256px;font-size:13.9px;color:#4e4e4e">36,0 MiB</div>
<div class="a nw" style="right:5px;top:256px;font-size:13.9px;color:#4e4e4e">989</div>
<div class="a nw" style="left:20px;top:281px;font-size:13.9px;color:#4e4e4e">nm-applet</div>
<div class="a nw" style="right:123px;top:281px;font-size:13.9px;color:#4e4e4e">0%</div>
<div class="a nw" style="right:53px;top:281px;font-size:13.9px;color:#4e4e4e">31,6 MiB</div>
<div class="a nw" style="right:5px;top:281px;font-size:13.9px;color:#4e4e4e">1379</div>
</div>
<svg class="a" style="left:5px;top:199px" width="14" height="12"><rect x=".5" y=".5" width="13" height="11" fill="#1c2a2a" stroke="#888"/><path d="M1.5 7h3l1.3-3 1.5 5 1.2-3h4" fill="none" stroke="#5fe0b0" stroke-width="1.1"/></svg>
<div class="a" style="left:806px;top:192px;width:15px;height:290px;background:linear-gradient(90deg,#f0f0f0,#fafafa)"></div>
<div class="a" style="left:810px;top:196px;width:9px;height:50px;border:1px solid #9a9a9a;border-radius:5px;background:#e8e8e8"></div>
<div class="a" style="left:1px;top:480px;width:820px;height:1px;background:repeating-linear-gradient(90deg,#8e8e8e 0 6px,transparent 6px 10px)"></div>
<div class="a" style="left:1px;top:482px;width:820px;height:32px;background:#d0d0d0"></div>
<div class="a" style="left:240px;top:488px;width:12px;height:19px;background:#b2d582"></div>
<div class="a nw" style="left:255px;top:490px;font-size:13.5px;color:#8e8e8e">Inizializzazione processo</div>
<div class="a" style="left:421px;top:488px;width:12px;height:19px;background:#fbe67a"></div>
<div class="a nw" style="left:436px;top:490px;font-size:13.4px;color:#8e8e8e">Cambio processo in corso</div>
<div class="a" style="left:609px;top:488px;width:12px;height:19px;background:#e47272"></div>
<div class="a nw" style="left:624px;top:490px;font-size:13.6px;color:#8e8e8e">Terminazione processo in corso</div>
<div class="a" style="left:0;top:0;width:822px;height:514px;border:1px solid #a2a2a2;border-top-color:transparent;border-radius:5px 5px 0 0"></div>
</div>

<!-- ============ Settings ============ -->
<div id="st" class="a" style="left:1213px;top:0;width:707px;height:643px;background:#d0d0d0;border-radius:5px 0 0 0;overflow:hidden">
<div class="a" style="left:0;top:0;width:707px;height:66px;background:linear-gradient(#8a8a8a 0,#8a8a8a 1px,#f4f4f4 1px,#e2e2e2 3px,#d2d2d2 35%,#c4c4c4 70%,#b9b9b9)"></div>
<div class="a" style="left:0;top:66px;width:707px;height:517px;background:linear-gradient(90deg,#a8a8a8,#cfcfcf 4px)"></div>
<div class="a" style="left:11px;top:10px;width:0;height:0;border-left:5px solid transparent;border-right:5px solid transparent;border-top:6px solid #bdbdbd"></div>
<div class="a itl nw" style="left:332px;top:5px;font-size:12.7px">Impostazioni</div>
<div class="a" style="left:623px;top:30px;width:100px;height:29px;background:#f7f7f7;border:1px solid #b4b4b4;border-radius:4px"></div>
<svg class="a" style="left:629px;top:38px" width="15" height="15"><circle cx="6" cy="6" r="4.5" fill="none" stroke="#777" stroke-width="1.4"/><path d="M9.3 9.3l4.2 4.2" stroke="#777" stroke-width="1.8"/></svg>
<div class="a" style="left:4px;top:66px;width:703px;height:515px;background:#f8f8f8;border-left:1px solid #9a9a9a;border-top:1px solid #9a9a9a"></div>
<div class="a" style="left:4px;top:66px;width:30px;height:515px;background:linear-gradient(90deg,rgba(0,0,0,.07),rgba(0,0,0,0))"></div>
<div class="a nw" style="left:11px;top:75px;font-size:13.6px;font-weight:700;color:#404040">Personale</div>
<div class="a" style="left:11px;top:92px;width:700px;height:1px;background:#dadada"></div>
<div class="a nw" style="left:11px;top:351px;font-size:13.6px;font-weight:700;color:#404040">Hardware</div>
<div class="a" style="left:11px;top:368px;width:700px;height:1px;background:#dadada"></div>
<svg class="a" style="left:12px;top:101px" width="50" height="48" viewBox="0 0 48 48"><circle cx="8" cy="30" r="3.2" fill="#9ae04a"/><circle cx="8" cy="21" r="3.2" fill="#4cc04a"/><circle cx="12" cy="13" r="3.2" fill="#3aa8b8"/><circle cx="19" cy="8" r="3.2" fill="#3a60d8"/><circle cx="27" cy="8" r="3.2" fill="#7040c0"/><circle cx="42" cy="22" r="3.2" fill="#d040c0"/><circle cx="42" cy="31" r="3.2" fill="#f03a3a"/><path d="M8 45l6-10 24-24 5 5-24 24z" fill="#2b2b2b"/><path d="M8 45l6-10 5 5z" fill="#f0e0a0"/><path d="M8 45l2-3 1 1z" fill="#000"/><path d="M38 11l3-3 5 5-3 3z" fill="#e88ad8"/><path d="M12 46q14-6 32-7" stroke="#ccc" stroke-width="1.5" fill="none"/></svg>
<div class="a nw" style="left:62px;top:117px;font-size:13.8px;line-height:19px;color:#505050">Aspetto</div>
<svg class="a" style="left:198px;top:101px" width="50" height="48" viewBox="0 0 48 48"><path d="M5 5h35v37H24l-3 4-3-4H5z" fill="#f6f6f6" stroke="#c8c8c8"/><rect x="10" y="12" width="3" height="3" fill="#999"/><rect x="10" y="20" width="3" height="3" fill="#999"/><path d="M16 13.5h15M16 21.5h15" stroke="#999" stroke-width="1.2"/><path d="M10 31h26" stroke="#3a90e0" stroke-width="1.6"/><rect x="9" y="29" width="5" height="4" fill="#3a90e0"/><path d="M15 33l4-7 20-20 5 5-20 20z" fill="#2b2b2b"/><path d="M15 33l4-7 5 5z" fill="#f0e0a0"/><path d="M39 6l3-3 5 5-3 3z" fill="#e88ad8"/></svg>
<div class="a nw" style="left:246px;top:117px;font-size:13.8px;line-height:19px;color:#505050">Editor del Menu</div>
<svg class="a" style="left:382px;top:101px" width="50" height="48" viewBox="0 0 48 48"><rect x="3" y="5" width="42" height="40" rx="2" fill="#3d8fe0"/><rect x="3" y="5" width="42" height="40" rx="2" fill="url(#gblue)"/><rect x="8" y="10" width="19" height="19" fill="#e8eef6" stroke="#9ab8dc"/><rect x="13" y="16" width="19" height="19" fill="#eef2f8" stroke="#9ab8dc"/><rect x="18" y="22" width="19" height="19" fill="#f6f8fb" stroke="#9ab8dc"/></svg>
<div class="a nw" style="left:430px;top:108px;font-size:13.8px;line-height:19px;color:#505050">Gestore delle<br>finestre</div>
<svg class="a" style="left:564px;top:101px" width="50" height="48" viewBox="0 0 48 48"><rect x="7" y="8" width="28" height="36" rx="2" fill="#e1a85a" stroke="#b78640"/><rect x="14" y="4" width="14" height="6" rx="2" fill="#ddd" stroke="#999"/><rect x="20" y="16" width="23" height="30" fill="#eaeaea" stroke="#aaa"/><path d="M11 26q2-6 9-5v-4l8 8-8 8v-4q-6 0-9-3z" fill="#6cc83c" stroke="#3a9a20" stroke-width=".8"/></svg>
<div class="a nw" style="left:614px;top:98px;font-size:13.8px;line-height:19px;color:#505050">Impostazioni del<br>gestore degli<br>appunti</div>
<svg class="a" style="left:12px;top:163px" width="50" height="48" viewBox="0 0 48 48"><path d="M5 3h33v43H5z" fill="#f2f2f2" stroke="#bdbdbd"/><path d="M9 9h25M9 13h25M9 17h25M9 21h25M9 25h25M9 29h25M9 33h25M9 37h25" stroke="#c8c8c8" stroke-width="1"/><path d="M12 4v41" stroke="#e8a0a0" stroke-width=".8"/><path d="M17 43l3-7 19-19 4 4-19 19z" fill="#2b2b2b"/><path d="M17 43l3-7 4 4z" fill="#f0e0a0"/><path d="M39 17l3-3 4 4-3 3z" fill="#e88ad8"/></svg>
<div class="a nw" style="left:62px;top:170px;font-size:13.8px;line-height:19px;color:#505050">Impostazioni<br>dell'editor di testo</div>
<svg class="a" style="left:198px;top:163px" width="50" height="48" viewBox="0 0 48 48"><rect x="4" y="4" width="40" height="40" rx="3" fill="#2e2e2e" stroke="#555" stroke-width="1.5"/><text x="9" y="25" font-family="Liberation Sans" font-weight="700" font-size="15" fill="#eee">$</text><path d="M21 25h8" stroke="#eee" stroke-width="2.5"/></svg>
<div class="a nw" style="left:246px;top:170px;font-size:13.8px;line-height:19px;color:#505050">Impostazioni del<br>terminale di Xfce</div>
<svg class="a" style="left:382px;top:163px" width="50" height="48" viewBox="0 0 48 48"><circle cx="24" cy="24" r="21" fill="#3a90e0"/><circle cx="24" cy="24" r="21" fill="url(#gblue)"/><circle cx="24" cy="18" r="7.5" fill="#fff"/><path d="M11 38q2-10 13-10t13 10q-5 5-13 5t-13-5z" fill="#fff"/></svg>
<div class="a nw" style="left:430px;top:170px;font-size:13.8px;line-height:19px;color:#505050">Informazioni<br>personali</div>
<svg class="a" style="left:564px;top:163px" width="50" height="48" viewBox="0 0 48 48"><path d="M2 14q0-3 3-3h17l3-8 3 8h15q3 0 3 3v27q0 3-3 3H5q-3 0-3-3z" fill="#0e0e0e" stroke="#444" stroke-width="1"/><circle cx="14" cy="28" r="6.5" fill="#3a8ae0"/><text x="11.8" y="32.5" font-family="Liberation Serif" font-style="italic" font-weight="700" font-size="11" fill="#fff">i</text><path d="M25 22h5M32 22h10M25 28h3M30 28h3M35 28h7M25 34h17" stroke="#eee" stroke-width="1.8"/></svg>
<div class="a nw" style="left:614px;top:179px;font-size:13.8px;line-height:19px;color:#505050">Notifiche</div>
<svg class="a" style="left:12px;top:226px" width="50" height="48" viewBox="0 0 48 48"><rect x="2" y="10" width="44" height="30" fill="#e8e8e8" stroke="#bbb"/><rect x="4" y="12" width="9" height="26" rx="2" fill="#f2f2f2" stroke="#999"/><path d="M10 22l-3 3 3 3z" fill="#222"/><path d="M17 21l6 5M22 23q2-4 8-3l6-2 3 3-2 2q1 6-4 8l1 3h-3l-1-2h-7l-2 3h-2l1-4q-2-2-1-5z" fill="#111"/></svg>
<div class="a nw" style="left:62px;top:242px;font-size:13.8px;line-height:19px;color:#505050">Pannello</div>
<svg class="a" style="left:198px;top:226px" width="50" height="48" viewBox="0 0 48 48"><rect x="3" y="4" width="42" height="42" rx="3" fill="#12a8d8"/><rect x="3" y="33" width="42" height="13" rx="1" fill="#444a60"/><rect x="8" y="37" width="6" height="6" rx="1" fill="#d080d8"/><rect x="17" y="37" width="6" height="6" rx="1" fill="#d080d8"/><rect x="26" y="37" width="6" height="6" rx="1" fill="#d080d8"/><path d="M24 16l17 22" stroke="#222" stroke-width="4"/><path d="M22 14l5 6" stroke="#eee" stroke-width="4"/><circle cx="10" cy="12" r="1.5" fill="#f4e040"/><circle cx="16" cy="18" r="1.5" fill="#f4e040"/><circle cx="22" cy="9" r="1.5" fill="#f4e040"/><circle cx="30" cy="14" r="1.5" fill="#f4e040"/><circle cx="34" cy="8" r="1.5" fill="#f4e040"/></svg>
<div class="a nw" style="left:246px;top:242px;font-size:13.8px;line-height:19px;color:#505050">Profili del pannello</div>
<svg class="a" style="left:382px;top:226px" width="50" height="48" viewBox="0 0 48 48"><rect x="3" y="5" width="40" height="40" rx="2" fill="#3d8fe0"/><rect x="3" y="5" width="40" height="40" rx="2" fill="url(#gblue)"/><rect x="10" y="10" width="20" height="28" fill="#eef2f8" stroke="#9ab8dc"/><rect x="17" y="16" width="20" height="26" fill="#f6f8fb" stroke="#9ab8dc"/><path d="M20 14l2 5 5 .5-4 3 1.5 5-4.5-3-4.5 3 1.5-5-4-3 5-.5z" fill="#f4d02a"/><path d="M9 30l1.5 3.5 3.5.3-3 2 1 3.5-3-2-3 2 1-3.5-3-2 3.5-.3z" fill="#f4d02a"/><path d="M31 11l14 31" stroke="#222" stroke-width="2.5"/></svg>
<div class="a nw" style="left:430px;top:223px;font-size:13.8px;line-height:19px;color:#505050">Regolazioni del<br>gestore delle<br>finestre</div>
<svg class="a" style="left:564px;top:226px" width="50" height="48" viewBox="0 0 48 48"><rect x="0" y="3" width="47" height="34" rx="1" fill="#111"/><rect x="2" y="5" width="43" height="30" fill="#1e3454"/><rect x="2" y="5" width="43" height="30" fill="url(#gblue)"/><circle cx="33" cy="21" r="8.5" fill="#e6e6e6"/><circle cx="37.5" cy="17.5" r="7.5" fill="#203656"/><path d="M11 11h5M13.5 8.5v5M19 16h3M20.5 14.5v3M8 23h3M9.5 21.5v3M24 11h3M25.5 9.5v3" stroke="#eee" stroke-width="1"/><path d="M19.5 37h8l2 5h-12z" fill="#ddd"/><rect x="14.5" y="41" width="18" height="3.5" rx="1" fill="#e6e6e6" stroke="#aaa" stroke-width=".6"/></svg>
<div class="a nw" style="left:614px;top:242px;font-size:13.8px;line-height:19px;color:#505050">Salvaschermo</div>
<svg class="a" style="left:12px;top:288px" width="50" height="48" viewBox="0 0 48 48"><rect x="0" y="5" width="47" height="33" rx="1" fill="#111"/><rect x="2" y="7" width="43" height="29" fill="#4a9ae8"/><rect x="2" y="7" width="43" height="29" fill="url(#gblue)"/><path d="M31 7h14v12q-6-2-8-3-4-2-6-9z" fill="#555"/><path d="M31 7q2 7 6 9 2 1 8 3l-6-2q-6-3-8-10z" fill="#e8e8e8"/><path d="M19.5 38h8l2 5h-12z" fill="#ddd"/><rect x="14.5" y="42" width="18" height="3" rx="1" fill="#e6e6e6" stroke="#aaa" stroke-width=".6"/></svg>
<div class="a nw" style="left:62px;top:304px;font-size:13.8px;line-height:19px;color:#505050">Scrivania</div>
<svg class="a" style="left:198px;top:288px" width="50" height="48" viewBox="0 0 48 48"><rect x="0" y="5" width="47" height="33" rx="1" fill="#111"/><rect x="2" y="7" width="43" height="29" fill="#4a9ae8"/><rect x="2" y="7" width="43" height="29" fill="url(#gblue)"/><path d="M23.5 7v29M2 21.5h43" stroke="#dde" stroke-width=".8"/><path d="M19.5 38h8l2 5h-12z" fill="#ddd"/><rect x="14.5" y="42" width="18" height="3" rx="1" fill="#e6e6e6" stroke="#aaa" stroke-width=".6"/></svg>
<div class="a nw" style="left:246px;top:304px;font-size:13.8px;line-height:19px;color:#505050">Spazi di lavoro</div>
<svg class="a" style="left:382px;top:288px" width="50" height="48" viewBox="0 0 48 48"><path d="M2 8q12-4 22 0t22 0v34q-10 4-22 0T2 42z" fill="#3a8ae0"/><path d="M2 8q12-4 22 0t22 0v34q-10 4-22 0T2 42z" fill="url(#gblue)"/><circle cx="24" cy="25" r="11" fill="none" stroke="#dfeefc" stroke-width="1.6"/><circle cx="24" cy="25" r="7" fill="none" stroke="#dfeefc" stroke-width="1.4"/><circle cx="24" cy="25" r="3" fill="#dfeefc"/></svg>
<div class="a nw" style="left:430px;top:304px;font-size:13.8px;line-height:19px;color:#505050">Supporto lingue</div>
<svg class="a" style="left:12px;top:370px" width="50" height="48" viewBox="0 0 48 48"><rect x="8" y="3" width="33" height="43" rx="16" fill="#3a8ae0"/><rect x="8" y="3" width="33" height="43" rx="16" fill="url(#gblue)"/><path d="M18 17l13 12-6 6V13l6 6-13 12" fill="none" stroke="#fff" stroke-width="2.6" stroke-linejoin="round"/></svg>
<div class="a nw" style="left:62px;top:386px;font-size:13.8px;line-height:19px;color:#505050">Adattatori Bluetooth</div>
<svg class="a" style="left:198px;top:370px" width="50" height="48" viewBox="0 0 48 48"><circle cx="24" cy="24" r="21" fill="#b070d8"/><circle cx="24" cy="24" r="21" fill="url(#gpurple)"/><path d="M9 14l30 7M7 30l32 2M14 40l12-34M28 44l-6-38M9 14l5 26M39 21l-11 23" stroke="#f0e0fa" stroke-width=".9" fill="none"/><circle cx="9" cy="14" r="1.5" fill="#fff"/><circle cx="39" cy="21" r="1.5" fill="#fff"/><circle cx="14" cy="40" r="1.5" fill="#fff"/><circle cx="28" cy="44" r="1.5" fill="#fff"/></svg>
<div class="a nw" style="left:246px;top:376px;font-size:13.8px;line-height:19px;color:#505050">Configurazione di<br>rete avanzata</div>
<svg class="a" style="left:382px;top:370px" width="50" height="48" viewBox="0 0 48 48"><rect x="7" y="3" width="30" height="41" rx="3" fill="#e8e8e8" stroke="#bbb"/><circle cx="22" cy="26" r="12" fill="#d0d0d0"/><path d="M15 16l5 5-3 3-5-5q-2 5 2 9t9 2l12 12 4-4-12-12q2-5-2-9t-9-2z" fill="#555"/><rect x="5" y="42" width="34" height="4" rx="1" fill="#222"/></svg>
<div class="a nw" style="left:430px;top:386px;font-size:13.8px;line-height:19px;color:#505050">Dischi</div>
<svg class="a" style="left:564px;top:370px" width="50" height="48" viewBox="0 0 48 48"><path d="M0 10h37v27H0z" fill="#3e8a2e" stroke="#2a5a20"/><rect x="6" y="14" width="16" height="10" fill="#333" stroke="#c8b040" stroke-dasharray="1 1"/><path d="M4 28q6 0 8 4M14 28h10" stroke="#7ac060" stroke-width=".8" fill="none"/><path d="M38 3h6v38h-6" fill="none" stroke="#ccc" stroke-width="1.8"/><circle cx="33" cy="16" r="1.3" fill="#4a8ae0"/><circle cx="33" cy="21" r="1.3" fill="#4a8ae0"/><path d="M7 33h14v4H7z" fill="#c8b040"/><rect x="29" y="30" width="17" height="15" rx="1.5" fill="#d4b870" stroke="#8a7040"/><path d="M32.5 30v-4q5-7 10 0v4" fill="none" stroke="#bbb" stroke-width="2.2"/></svg>
<div class="a nw" style="left:614px;top:386px;font-size:13.8px;line-height:19px;color:#505050">Driver aggiuntivi</div>
<svg class="a" style="left:12px;top:426px" width="50" height="48" viewBox="0 0 48 48"><rect x="8" y="3" width="33" height="43" rx="16" fill="#3a8ae0"/><rect x="8" y="3" width="33" height="43" rx="16" fill="url(#gblue)"/><path d="M18 17l13 12-6 6V13l6 6-13 12" fill="none" stroke="#fff" stroke-width="2.6" stroke-linejoin="round"/></svg>
<div class="a nw" style="left:62px;top:442px;font-size:13.8px;line-height:19px;color:#505050">Gestore Bluetooth</div>
<svg class="a" style="left:198px;top:426px" width="50" height="48" viewBox="0 0 48 48"><circle cx="24" cy="24" r="20" fill="#f6c830" stroke="#d8a820"/><path d="M27 10l-9 16h6l-3 13 9-17h-6z" fill="#222"/></svg>
<div class="a nw" style="left:246px;top:442px;font-size:13.8px;line-height:19px;color:#505050">Gestore dell'energia</div>
<svg class="a" style="left:382px;top:426px" width="50" height="48" viewBox="0 0 48 48"><rect x="14" y="3" width="21" height="42" rx="10" fill="#f2f2f2" stroke="#ccc"/><circle cx="24.5" cy="34" r="1.6" fill="none" stroke="#aaa" stroke-width=".8"/></svg>
<div class="a nw" style="left:430px;top:442px;font-size:13.8px;line-height:19px;color:#505050">Mouse e touchpad</div>
<svg class="a" style="left:564px;top:426px" width="50" height="48" viewBox="0 0 48 48"><g style="isolation:isolate"><circle cx="24" cy="15.5" r="12" fill="#40e020"/><circle cx="15.5" cy="30" r="12" fill="#2070f0" style="mix-blend-mode:screen"/><circle cx="32.5" cy="30" r="12" fill="#f03020" style="mix-blend-mode:screen"/></g></svg>
<div class="a nw" style="left:614px;top:442px;font-size:13.8px;line-height:19px;color:#505050">Profili colori</div>
<svg class="a" style="left:12px;top:482px" width="50" height="48" viewBox="0 0 48 48"><path d="M9 19q-3 0-3 5t3 5h7l3-10z" fill="#bbb" stroke="#777" stroke-width="1"/><path d="M14 18l12-12 4 36-12-12z" fill="#888"/><ellipse cx="28" cy="24" rx="8" ry="18" transform="rotate(-12 28 24)" fill="#d8d8d8" stroke="#666" stroke-width="1.2"/><ellipse cx="28" cy="24" rx="5.8" ry="14" transform="rotate(-12 28 24)" fill="#3e3e3e"/><circle cx="28" cy="24" r="2.6" fill="#777"/></svg>
<div class="a nw" style="left:62px;top:488px;font-size:13.8px;line-height:19px;color:#505050">Regolazione del<br>volume PulseAudio</div>
<svg class="a" style="left:198px;top:482px" width="50" height="48" viewBox="0 0 48 48"><rect x="2" y="4" width="44" height="40" rx="2" fill="#1a1a1a"/><rect x="36" y="4" width="8" height="40" fill="#f0b830"/><path d="M39 8v32" stroke="#8a6a20" stroke-width=".8" stroke-dasharray="1 3"/><path d="M6 10l26 28H6z" fill="#ccc"/><path d="M11 22l12 12H11z" fill="#1a1a1a"/></svg>
<div class="a nw" style="left:246px;top:498px;font-size:13.8px;line-height:19px;color:#505050">Schermo</div>
<svg class="a" style="left:382px;top:482px" width="50" height="48" viewBox="0 0 48 48"><rect x="8" y="7" width="29" height="14" rx="2" fill="#2a2a2a"/><path d="M11 3h16l6 6v14H11z" fill="#f0f0f0" stroke="#c8c8c8" stroke-width=".8"/><path d="M27 3v6h6" fill="#ddd"/><rect x="1" y="21" width="42" height="18" rx="2" fill="#f4f4f4" stroke="#bbb"/><rect x="8.5" y="21" width="27" height="13" fill="#333"/><rect x="8.5" y="21" width="27" height="3" fill="#555"/><circle cx="39" cy="36" r="1" fill="#7c7"/></svg>
<div class="a nw" style="left:430px;top:498px;font-size:13.8px;line-height:19px;color:#505050">Stampanti</div>
<svg class="a" style="left:564px;top:482px" width="50" height="48" viewBox="0 0 48 48"><path d="M9 19q-3 0-3 5t3 5h7l3-10z" fill="#bbb" stroke="#777" stroke-width="1"/><path d="M14 18l12-12 4 36-12-12z" fill="#888"/><ellipse cx="28" cy="24" rx="8" ry="18" transform="rotate(-12 28 24)" fill="#d8d8d8" stroke="#666" stroke-width="1.2"/><ellipse cx="28" cy="24" rx="5.8" ry="14" transform="rotate(-12 28 24)" fill="#3e3e3e"/><circle cx="28" cy="24" r="2.6" fill="#777"/></svg>
<div class="a nw" style="left:614px;top:498px;font-size:13.8px;line-height:19px;color:#505050">Suoni</div>
<div class="a" style="left:5px;top:580px;width:702px;height:1px;background:repeating-linear-gradient(90deg,#a4a4a4 0 5px,transparent 5px 10px)"></div>
<div class="a" style="left:0;top:582px;width:707px;height:1px;background:#8a8a8a"></div>
<div class="a" style="left:0;top:583px;width:707px;height:60px;background:#d0d0d0"></div>
<div class="a" style="left:534px;top:609px;width:159px;height:28px;border:1px solid #a8a8a8;border-radius:4px;background:linear-gradient(#dcdcdc,#d2d2d2)"></div>
<svg class="a" style="left:542px;top:616px" width="14" height="14"><path d="M0 7l6-6v3.5h7v5H6V13z" fill="#a8a8a8"/></svg>
<div class="a nw" style="left:559px;top:615px;font-size:13.7px;color:#a8a8a8">Tutte le impostazioni</div>
<div class="a" style="left:699px;top:609px;width:40px;height:28px;border:1px solid #a8a8a8;border-radius:4px;background:linear-gradient(#dcdcdc,#d2d2d2)"></div>
<div class="a" style="left:0;top:0;width:707px;height:643px;border:1px solid #a2a2a2;border-right:0;border-top-color:transparent;border-radius:5px 0 0 0"></div>
</div>

<!-- ============ Thunar ============ -->
<div id="th" class="a" style="left:529px;top:519px;width:1151px;height:522px;background:#d0d0d0;border-radius:6px 6px 0 0;box-shadow:0 2px 14px rgba(0,0,0,.5);overflow:hidden">
<div class="a" style="left:0;top:0;width:1151px;height:90px;background:linear-gradient(#d0d0d0,#c9c9c9 6px,#d9d9d9 12px,#d0d0d0 24px,#cdcdcd 50px,#c8c8c8 80px,#bdbdbd)"></div>
<div class="a" style="left:12px;top:12px;width:0;height:0;border-left:5px solid transparent;border-right:5px solid transparent;border-top:6px solid #6e6e6e"></div>
<div class="a nw" style="left:501px;top:5px;font-size:12.5px;font-weight:700;color:#585858;text-shadow:0 1px 0 #eee">marcello - Thunar</div>
<div class="a" style="left:1088px;top:12px;width:9px;height:2px;background:#6a6a6a"></div>
<div class="a" style="left:1109px;top:12px;width:9px;height:2px;background:#6a6a6a"></div><div class="a" style="left:1113px;top:9px;width:2px;height:9px;background:#6a6a6a"></div>
<svg class="a" style="left:1131px;top:8px" width="11" height="11"><path d="M1 1l9 9M10 1l-9 9" stroke="#6a6a6a" stroke-width="1.8"/></svg>
<div class="a nw" style="left:10px;top:30px;font-size:14px;color:#585858">File</div>
<div class="a nw" style="left:49px;top:30px;font-size:13.8px;color:#585858">Modifica</div>
<div class="a nw" style="left:119px;top:30px;font-size:13.1px;color:#585858">Visualizzazione</div>
<div class="a nw" style="left:226px;top:30px;font-size:14px;color:#585858">Vai</div>
<div class="a nw" style="left:263px;top:30px;font-size:13.7px;color:#585858">Segnalibri</div>
<div class="a nw" style="left:342px;top:30px;font-size:14px;color:#585858">Aiuto</div>
<svg class="a" style="left:10px;top:61px" width="20" height="17"><path d="M1 8.5L8.5 1v4.5H19v6H8.5V16z" fill="#444"/></svg>
<svg class="a" style="left:41px;top:61px" width="20" height="17"><path d="M19 8.5L11.5 1v4.5H1v6h10.5V16z" fill="#8a8a8a"/></svg>
<svg class="a" style="left:73px;top:61px" width="17" height="18"><path d="M8.5 1L1 8.5h4.5V17h6V8.5H16z" fill="#444"/></svg>
<svg class="a" style="left:103px;top:61px" width="19" height="18"><path d="M9.5 1L1 9h2.5v8h4.5v-5h3v5h4.5V9H18l-3-2.8V2h-2v2.3z" fill="#444"/></svg>
<div class="a" style="left:130px;top:56px;width:986px;height:28px;border:1px solid #ababab;border-radius:4px;background:linear-gradient(#e4e4e4,#d6d6d6)"></div>
<div class="a" style="left:153px;top:56px;width:101px;height:28px;border:1px solid #ababab;background:linear-gradient(#c2c2c2,#b6b6b6)"></div>
<div class="a" style="left:343px;top:57px;width:1px;height:26px;background:#b0b0b0"></div>
<div class="a" style="left:1092px;top:57px;width:1px;height:26px;background:#a0a0a0"></div>
<svg class="a" style="left:138px;top:64px" width="8" height="12"><path d="M7 1L1 6l6 5z" fill="#444"/></svg>
<svg class="a" style="left:162px;top:63px" width="16" height="14"><path d="M8 1L1 7.5h2V13h4V9.5h2V13h4V7.5h2l-2.5-2.2V2h-1.6v1.9z" fill="#444"/></svg>
<div class="a nw" style="left:184px;top:62px;font-size:14px;font-weight:700;color:#4a4a4a">marcello</div>
<div class="a nw" style="left:270px;top:62px;font-size:14.3px;color:#505050">Immagini</div>
<svg class="a" style="left:1068px;top:62px" width="16" height="16"><path d="M1.5 14.5l1-4 8.5-8.5 3 3L5.5 13.5z" fill="#333"/><path d="M2.3 13.7l.5-2 1.5 1.5z" fill="#eee"/><path d="M11.7 1.3l1-1 3 3-1 1z" fill="#333"/></svg>
<svg class="a" style="left:1101px;top:63px" width="8" height="14"><path d="M1 1l6 6-6 6z" fill="#8a8a8a"/></svg>
<svg class="a" style="left:1120px;top:59px" width="22" height="22"><circle cx="9" cy="9" r="7" fill="none" stroke="#333" stroke-width="2"/><path d="M14 14l6 6" stroke="#333" stroke-width="2.6" stroke-linecap="round"/></svg>
<div class="a" style="left:0;top:89px;width:1151px;height:1px;background:#9c9c9c"></div>
<div class="a" style="left:1px;top:90px;width:236px;height:432px;background:#dde1e8"></div>
<div class="a" style="left:237px;top:90px;width:2px;height:432px;background:#9a9a9a"></div>
<div class="a" style="left:1px;top:119px;width:236px;height:33px;background:linear-gradient(#c8ced8,#d4d9e1 40%,#d2d7df);border-top:1px solid #c0c6d0;border-bottom:1px solid #e6e9ee"></div>
<div class="a nw" style="left:9px;top:97px;font-size:13.2px;font-weight:700;color:#222">Posizioni</div>
<svg class="a" style="left:17px;top:121px" width="32" height="30" viewBox="0 0 32 30"><path d="M16 1L1 16h5v13h20V16h5l-5-5V3h-4v4z" fill="#3a78c8"/><path d="M16 1L1 16h5v13h20V16h5l-5-5V3h-4v4z" fill="url(#gblue)"/></svg>
<div class="a nw" style="left:53px;top:128px;font-size:14px;color:#404040">marcello</div>
<svg class="a" style="left:18px;top:159px" width="30" height="24" viewBox="0 0 62 50"><use href="#bigfold"/><g transform="translate(31 30) scale(1.35) translate(-31 -30)"><use href="#s_doc" style="stroke-width:.7"/></g></svg>
<div class="a nw" style="left:53px;top:162px;font-size:14.1px;color:#303030">Documenti</div>
<svg class="a" style="left:18px;top:193px" width="30" height="24" viewBox="0 0 62 50"><use href="#bigfold"/><g transform="translate(31 30) scale(1.35) translate(-31 -30)"><use href="#s_img" style="stroke-width:.7"/></g></svg>
<div class="a nw" style="left:53px;top:196px;font-size:14.1px;color:#303030">Immagini</div>
<svg class="a" style="left:18px;top:227px" width="30" height="24" viewBox="0 0 62 50"><use href="#bigfold"/><g transform="translate(31 30) scale(1.35) translate(-31 -30)"><use href="#s_vid" style="stroke-width:.7"/></g></svg>
<div class="a nw" style="left:53px;top:230px;font-size:14.1px;color:#303030">Video</div>
<svg class="a" style="left:18px;top:261px" width="30" height="24" viewBox="0 0 62 50"><use href="#bigfold"/><g transform="translate(31 30) scale(1.35) translate(-31 -30)"><use href="#s_dl" style="stroke-width:.7"/></g></svg>
<div class="a nw" style="left:53px;top:264px;font-size:14.1px;color:#303030">Scaricati</div>
<div class="a nw" style="left:9px;top:296px;font-size:13.7px;font-weight:700;color:#222">Dispositivi</div>
<svg class="a" style="left:17px;top:324px" width="33" height="26" viewBox="0 0 33 26"><path d="M4 2h25l3 17H1z" fill="#d8d8d8" stroke="#8a8a8a"/><ellipse cx="16.5" cy="10" rx="10" ry="6" fill="#e8e8e8" stroke="#b0b0b0" stroke-width=".8"/><rect x="1" y="19" width="31" height="6" rx="1" fill="#5a5a5a"/><rect x="3" y="21" width="6" height="1.5" fill="#aaa"/></svg>
<div class="a nw" style="left:53px;top:327px;font-size:13.5px;color:#303030">File system</div>
<div class="a nw" style="left:9px;top:359px;font-size:13.7px;font-weight:700;color:#222">Rete</div>
<svg class="a" style="left:18px;top:388px" width="30" height="24" viewBox="0 0 62 50"><use href="#bigfold"/><path d="M22 38h18a4.5 4.5 0 0 0 0-9 6 6 0 0 0-11.5-2A5 5 0 0 0 22 38z" fill="#a8875a"/></svg>
<div class="a nw" style="left:53px;top:390px;font-size:13.3px;color:#303030">Esplora la rete</div>
<div class="a" style="left:239px;top:90px;width:911px;height:34px;background:#c9c9c9"></div>
<div class="a" style="left:244px;top:90px;width:448px;height:34px;background:linear-gradient(#d8d8d8,#d2d2d2);border-left:1px solid #b8b8b8;border-right:1px solid #b8b8b8"></div>
<div class="a" style="left:697px;top:90px;width:453px;height:34px;background:linear-gradient(#d6d6d6,#cfcfcf);border-left:1px solid #b8b8b8"></div>
<div class="a nw" style="left:260px;top:98px;font-size:14px;color:#505050">marcello</div>
<div class="a nw" style="left:715px;top:98px;font-size:14px;color:#9a9a9a">Documenti</div>
<svg class="a" style="left:669px;top:100px" width="10" height="10"><path d="M1.2 1.2l7.6 7.6M8.8 1.2L1.2 8.8" stroke="#333" stroke-width="2.2"/></svg>
<svg class="a" style="left:1124px;top:100px" width="10" height="10"><path d="M1.2 1.2l7.6 7.6M8.8 1.2L1.2 8.8" stroke="#333" stroke-width="2.2"/></svg>
<div class="a" style="left:239px;top:123px;width:911px;height:1px;background:#9a9a9a"></div>
<div class="a" style="left:239px;top:124px;width:911px;height:368px;background:#fdfdfd"></div>
<svg class="a" style="left:253px;top:141px" width="62" height="50" viewBox="0 0 62 50"><use href="#bigfold"/><use href="#s_doc"/></svg>
<div class="a nw" style="left:224px;top:201px;width:120px;text-align:center;font-size:14px;color:#303030">Documenti</div>
<svg class="a" style="left:337px;top:141px" width="62" height="50" viewBox="0 0 62 50"><use href="#bigfold"/><use href="#s_dl"/></svg>
<div class="a nw" style="left:308px;top:201px;width:120px;text-align:center;font-size:14px;color:#303030">Scaricati</div>
<svg class="a" style="left:421px;top:141px" width="62" height="50" viewBox="0 0 62 50"><use href="#bigfold"/><use href="#s_vid"/></svg>
<div class="a nw" style="left:392px;top:201px;width:120px;text-align:center;font-size:14px;color:#303030">Video</div>
<svg class="a" style="left:505px;top:141px" width="62" height="50" viewBox="0 0 62 50"><use href="#bigfold"/><use href="#s_img"/></svg>
<div class="a nw" style="left:476px;top:201px;width:120px;text-align:center;font-size:14px;color:#303030">Immagini</div>
<svg class="a" style="left:590px;top:144px" width="61" height="47" viewBox="0 0 61 47"><rect x=".5" y=".5" width="60" height="46" rx="3" fill="#8fd3ef"/><rect x=".5" y=".5" width="60" height="46" rx="3" fill="url(#gdesk)" stroke="#4a8ab0"/><path d="M.5 3.5q0-3 3-3h54q3 0 3 3V6H.5z" fill="#3b3f48"/><path d="M9 46.5l3-7h37l3 7z" fill="#3b3f48"/><rect x="16" y="41" width="4" height="3" fill="#8fd3ef"/><rect x="23" y="41" width="4" height="3" fill="#8fd3ef"/><rect x="30" y="41" width="4" height="3" fill="#8fd3ef"/><rect x="37" y="41" width="4" height="3" fill="#8fd3ef"/><rect x="44" y="41" width="3" height="3" fill="#8fd3ef"/></svg>
<div class="a nw" style="left:560px;top:201px;width:120px;text-align:center;font-size:14px;color:#303030">Scrivania</div>
<svg class="a" style="left:673px;top:141px" width="62" height="50" viewBox="0 0 62 50"><use href="#bigfold"/></svg>
<div class="a nw" style="left:644px;top:201px;width:120px;text-align:center;font-size:14px;color:#303030">snap</div>
<svg class="a" style="left:757px;top:141px" width="62" height="50" viewBox="0 0 62 50"><use href="#bigfold"/><use href="#s_tpl"/></svg>
<div class="a nw" style="left:728px;top:201px;width:120px;text-align:center;font-size:14px;color:#303030">Modelli</div>
<svg class="a" style="left:841px;top:141px" width="62" height="50" viewBox="0 0 62 50"><use href="#bigfold"/><use href="#s_pub"/></svg>
<div class="a nw" style="left:812px;top:201px;width:120px;text-align:center;font-size:14px;color:#303030">Pubblici</div>
<svg class="a" style="left:925px;top:141px" width="62" height="50" viewBox="0 0 62 50"><use href="#bigfold"/><use href="#s_mus"/></svg>
<div class="a nw" style="left:896px;top:201px;width:120px;text-align:center;font-size:14px;color:#303030">Musica</div>
<div class="a" style="left:239px;top:492px;width:911px;height:1px;background:#a0a0a0"></div>
<div class="a nw" style="left:252px;top:500px;font-size:13.7px;color:#505050">9 cartelle &nbsp;|&nbsp; Spazio libero: 194,3 GiB</div>
<div class="a" style="left:0;top:0;width:1151px;height:522px;border:1px solid #9c9c9c;border-top-color:#f0f0f0;border-radius:6px 6px 0 0"></div>
</div>

<!-- ============ panel ============ -->
<svg class="a" style="left:1722px;top:822px" width="40" height="48" viewBox="0 0 40 48"><defs><linearGradient id="gtr2" x1="0" x2="1"><stop offset="0" stop-color="#8c8c8c"/><stop offset=".3" stop-color="#e4e4e4"/><stop offset=".6" stop-color="#c8c8c8"/><stop offset="1" stop-color="#7a7a7a"/></linearGradient></defs><path d="M3 10v34q0 3 14 3t14-3V10z" fill="url(#gtr2)"/><ellipse cx="17" cy="10" rx="14" ry="4" fill="#9a9a9a"/><path d="M5 10q1-5 6-4 3-4 7-2 5-2 7 1 5 0 5 5q-6 3-13 3T5 10z" fill="#eef3fa" stroke="#9ab" stroke-width=".6"/><path d="M9 15v28M17 16v29M25 15v28" stroke="#9a9a9a" stroke-width="2"/><ellipse cx="33" cy="27" rx="5" ry="14" fill="#d8d8d8" stroke="#8a8a8a" stroke-width="1"/><path d="M35 22h2v10h-2" fill="none" stroke="#888" stroke-width="1.2"/></svg>
<div class="a nw" style="left:1700px;top:878px;width:80px;text-align:center;font-size:13.7px;color:#fff;text-shadow:0 1px 2px #000">Cestino</div>
<div id="panel" class="a" style="left:0;top:1052px;width:1920px;height:28px;background:#3c3842">
<svg class="a" style="left:1px;top:1px" width="26" height="26" viewBox="0 0 26 26"><circle cx="13" cy="13" r="12.5" fill="#1e5bb8"/><path d="M5 12q0-4 3-5l1 2q1-3 3-2l1 2 2-4 1 1 2-3 .5 1.5L21 3l-1 5q3 2 1 6-2 5-8 6-6 0-8-3z" fill="#fff"/></svg>
<div class="a" style="left:437px;top:0;width:198px;height:28px;border-radius:3px 3px 0 0;background:linear-gradient(#3d6a9c,#2c5582 60%,#2a4d78);border-top:1px solid #4a7ab0"></div>
<svg class="a" style="left:40px;top:7px" width="17" height="15"><rect x=".5" y=".5" width="16" height="13" fill="#1a2a2a" stroke="#ccc"/><path d="M2 8h3l1.5-3.5 2 6 1.5-3.5H15" fill="none" stroke="#5fe0b0" stroke-width="1.2"/></svg>
<div class="a nw" style="left:65px;top:6px;font-size:13.9px;color:#bdbdbd">Gestore dei processi</div>
<svg class="a" style="left:240px;top:7px" width="17" height="15"><path d="M1.5 .5h10l4 4v10h-14z" fill="#f4f4f4" stroke="#111"/><path d="M11.5 .5h4v4z" fill="#111"/></svg>
<div class="a nw" style="left:265px;top:6px;font-size:13.9px;color:#bdbdbd">LibreOffice</div>
<svg class="a" style="left:440px;top:7px" width="17" height="15"><path d="M1 3V1.5h6l1 1.5h7.5v2H1z" fill="#fafafa"/><path d="M.5 4.5h16l-.8 9.5H1.3z" fill="#f0d6a4" stroke="#c9a56d" stroke-width=".6"/></svg>
<div class="a nw" style="left:465px;top:6px;font-size:13.9px;color:#f2f2f2">marcello - Thunar</div>
<svg class="a" style="left:640px;top:7px" width="17" height="15"><rect x=".5" y=".5" width="16" height="14" rx="1" fill="#f0f0f0" stroke="#aaa"/><rect x="3" y="3" width="4.5" height="9" fill="#888"/><rect x="9.5" y="3" width="4.5" height="9" fill="#3a8ae0"/><rect x="3" y="7" width="4.5" height="2" fill="#ddd"/><rect x="9.5" y="5" width="4.5" height="2" fill="#ddd"/></svg>
<div class="a nw" style="left:665px;top:6px;font-size:13.9px;color:#bdbdbd">Impostazioni</div>
<svg class="a" style="left:1745px;top:4px" width="20" height="20"><rect width="20" height="20" fill="#5cb85a"/><circle cx="5" cy="15.5" r="2.2" fill="#fff"/><path d="M3 9.5a7.5 7.5 0 0 1 7.5 7.5M3 4.5a12.5 12.5 0 0 1 12.5 12.5" fill="none" stroke="#fff" stroke-width="2.2"/><circle cx="14" cy="6" r="2" fill="#f4d040"/></svg>
<svg class="a" style="left:1772px;top:6px" width="19" height="18"><path d="M5 0L0 6h3v7h4V6h3z" fill="#fff"/><path d="M13 17l5-6h-3V4h-4v7H8z" fill="#fff"/></svg>
<svg class="a" style="left:1796px;top:4px" width="24" height="20"><path d="M1 7h4l6-5v16l-6-5H1z" fill="#fff"/><path d="M14 6q2 4 0 8M16.5 3.5q4 6.5 0 13" fill="none" stroke="#fff" stroke-width="1.8"/><path d="M19.5 1q5 9 0 18" fill="none" stroke="#8a8a8a" stroke-width="1.8"/></svg>
<svg class="a" style="left:1826px;top:2px" width="23" height="24"><rect x=".5" y=".5" width="22" height="23" fill="#000" stroke="#888"/><path d="M1 22.5h4l.5-4 .5 4h2l.6-5 .4 5 .6-6 .5 6H22" fill="none" stroke="#3ad03a" stroke-width="1"/></svg>
<div class="a nw" style="left:1854px;top:6px;font-size:14.5px;color:#eaeaea">20:12</div>
<svg class="a" style="left:1895px;top:6px" width="24" height="18"><rect x="1" y="0" width="22" height="2" fill="#666"/><rect x="1" y="3" width="22" height="14" fill="#8cc8f0"/><path d="M2 17l3-5h14l3 5z" fill="#3b3f48"/><path d="M6 14.5h2M10 14.5h2M14 14.5h2M18 14.5h1" stroke="#8cc8f0" stroke-width="1.4"/></svg>
</div>

</body></html>
